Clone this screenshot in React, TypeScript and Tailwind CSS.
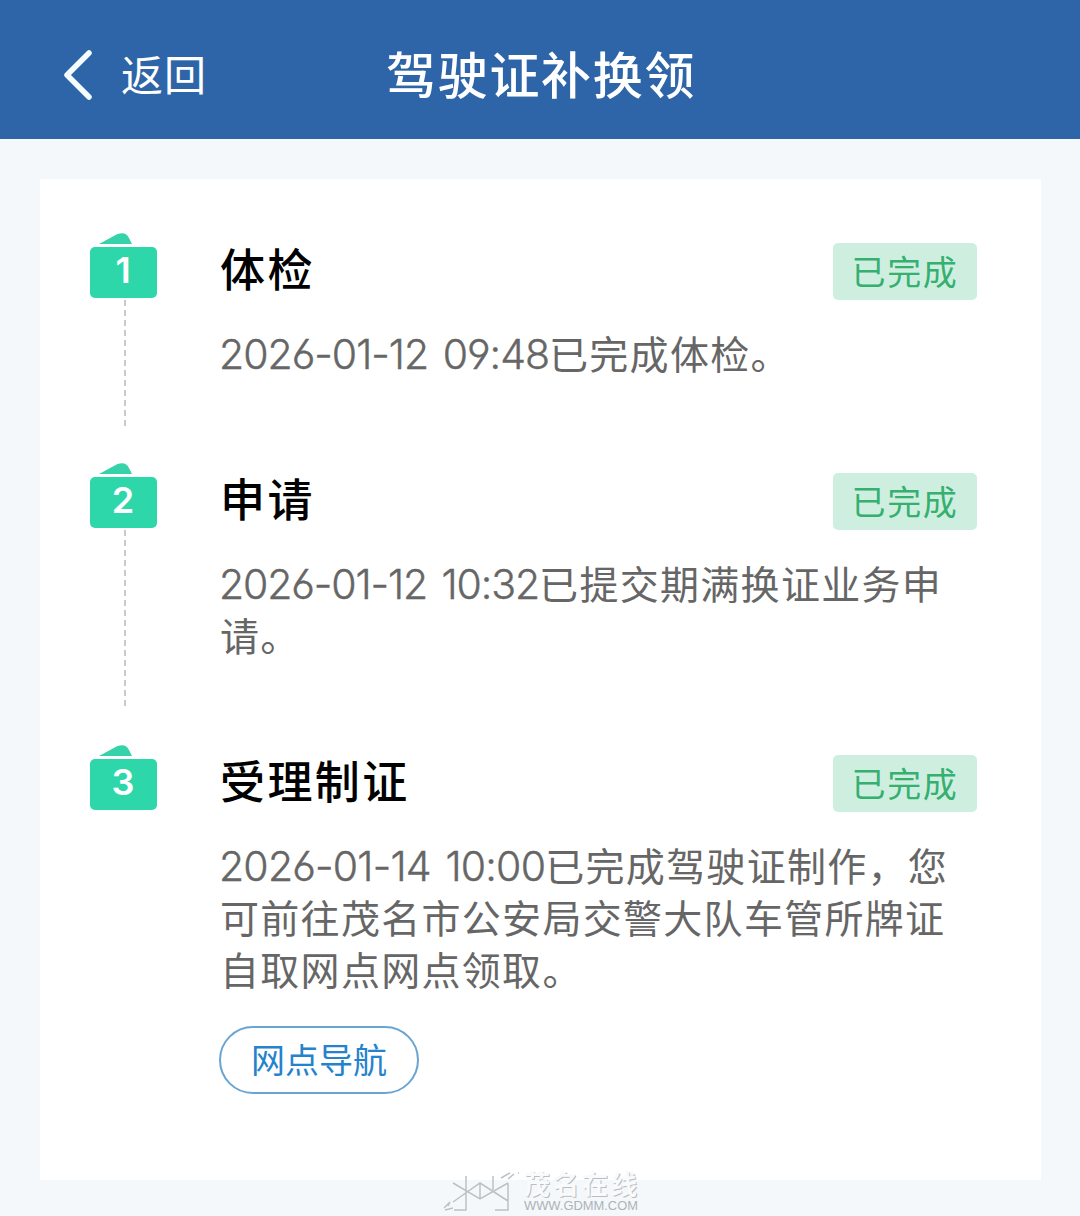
import React from "react";

type Line = { stamp?: string; text: string; tracking?: string };

function Row({ n, title, height, rail, lines, children }: { n: number; title: string; height: string; rail: string; lines: Line[]; children?: React.ReactNode }) {
  return (
    <section className={`flex ${height}`}>
      <div className="flex w-[68px] shrink-0 flex-col">
        <svg className="block h-[67px] w-[68px] shrink-0" viewBox="0 0 68 67">
          <path d="M9 11 27 1.2Q36-2 39 5L42 11Z" fill="#36d3aa" />
          <rect y="14" width="67" height="51" rx="5" fill="#2ed7aa" />
          <text x="33" y="50" textAnchor="middle" fontSize="36" fontWeight="600" fill="white" fontFamily="Inter">{n}</text>
        </svg>
        <svg className={`ml-[34px] block w-[2px] ${rail}`}><path d="M1 0V400" stroke="#cacaca" strokeWidth="2" strokeDasharray="6 4" /></svg>
      </div>
      <div className="ml-[62px] min-w-0 flex-1">
        <div className="flex h-[76px] items-center justify-between pr-16">
          <h2 className="-mt-[7px] whitespace-nowrap text-[45px] font-medium leading-none tracking-[2.4px] text-black">{title}</h2>
          <span className="mt-[1px] flex h-[57px] w-[144px] items-center justify-center rounded-[5px] bg-[#ceefdf] pb-[3px] text-[34px] tracking-[1.7px] text-[#36b070]">已完成</span>
        </div>
        <div className="mt-[17px] text-[39px] leading-[52px] text-[#666]">
          {lines.map((l) => (
            <p key={l.text} className="flex h-[52px] whitespace-nowrap tracking-[1.3px]">
              {l.stamp && <span className={`-ml-[1px] mt-[2px] shrink-0 font-['Inter'] text-[41px] font-light [-webkit-text-stroke:0.4px_#666] [font-feature-settings:'cv03','cv04'] [word-spacing:4px] ${l.tracking}`}>{l.stamp}</span>}
              <span>{l.text}</span>
            </p>
          ))}
        </div>
        {children}
      </div>
    </section>
  );
}

export default function App() {
  return (
    <div className="relative h-[1216px] w-[1080px] bg-[#f4f8fb] font-['Noto_Sans_CJK_SC',sans-serif]">
      <header className="grid h-[139px] grid-cols-[386px_1fr] items-center bg-[#2d65a8] pt-[11px] text-white">
        <div className="flex items-center pl-[62px]">
          <svg className="h-[52px] w-[32px]" viewBox="0 0 32 52" fill="none"><path d="M27 4 5 26 27 48" stroke="#f5fcff" strokeWidth="5.5" strokeLinecap="round" strokeLinejoin="round" /></svg>
          <span className="-mt-[5px] ml-[27px] text-[42px] tracking-[1px]">返回</span>
        </div>
        <h1 className="-mt-[5px] text-[50px] font-medium tracking-[1.7px]">驾驶证补换领</h1>
      </header>
      <main className="ml-[40px] mt-[40px] h-[1001px] w-[1001px] bg-white pl-[50px] pt-[54px]">
        <Row n={1} title="体检" height="h-[230px]" rail="h-[128px]" lines={[{ stamp: "2026-01-12 09:48", text: "已完成体检。", tracking: "tracking-[-1px]" }]} />
        <Row n={2} title="申请" height="h-[282px]" rail="h-[180px]" lines={[{ stamp: "2026-01-12 10:32", text: "已提交期满换证业务申", tracking: "tracking-[-1.1px]" }, { text: "请。" }]} />
        <Row n={3} title="受理制证" height="h-[400px]" rail="h-0" lines={[{ stamp: "2026-01-14 10:00", text: "已完成驾驶证制作，您", tracking: "tracking-[-0.8px]" }, { text: "可前往茂名市公安局交警大队车管所牌证" }, { text: "自取网点网点领取。" }]}>
          <button className="-ml-[1px] mt-[32px] flex h-[68px] w-[200px] items-center justify-center rounded-full border-2 border-[#69a5d3] pb-[4px] text-[34px] text-[#2583cc]">网点导航</button>
        </Row>
      </main>
      <div className="absolute left-[440px] top-[1170px] flex h-[46px] w-[204px] text-[#bcc1c5]">
        <svg className="h-[46px] w-[84px] shrink-0" viewBox="0 0 84 46" fill="none" stroke="currentColor" strokeWidth="1.5">
          <path d="M26 6V40H14M13 13 40 29 68 13M13 32 40 13 68 31M40 13V29M53 6V20M68 13V40H55M4 38 10 32 8 36M5 40 13 38M61 8 70 3M68 9 74 4M78 3H79" />
        </svg>
        <div className="flex w-[116px] flex-col">
          <span className="h-[29px] whitespace-nowrap text-[26px] font-bold leading-[26px] tracking-[3px] text-[#f8fafb] [text-shadow:1px_1px_0_#b8bdc1]">茂名在线</span>
          <svg className="h-[14px] w-[116px] overflow-visible">
            <text x="0" y="11" textLength="114" lengthAdjust="spacingAndGlyphs" fontFamily="Liberation Sans" fontSize="12" fill="#adb2b6">WWW.GDMM.COM</text>
          </svg>
        </div>
      </div>
    </div>
  );
}
